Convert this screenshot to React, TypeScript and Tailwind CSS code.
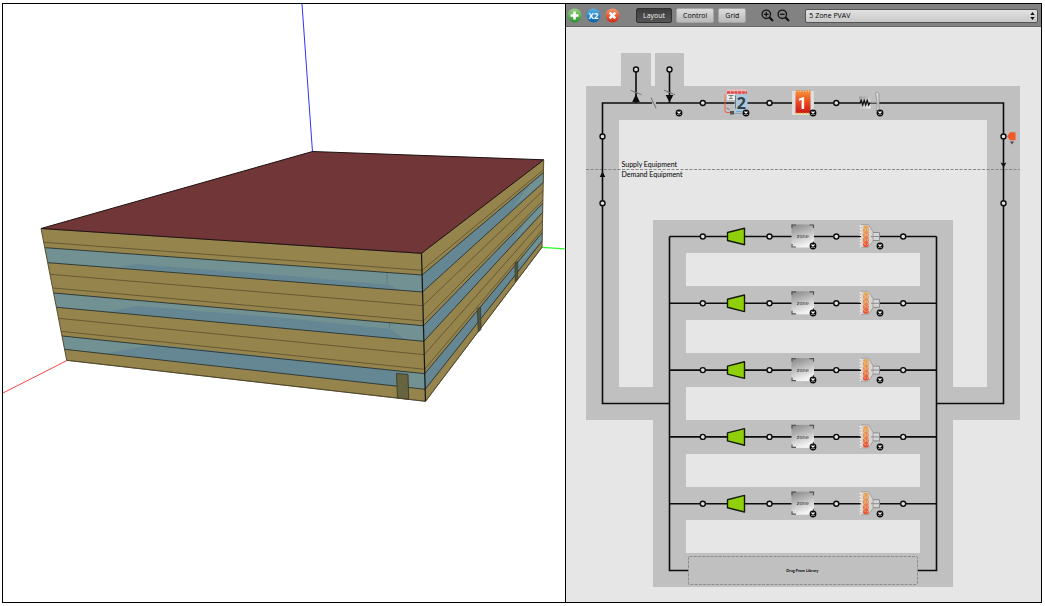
import type { ReactNode } from "react";

type Point = [number, number];

/* ---------- Building model ---------- */

// Heights at which each horizontal edge meets the three visible vertical corners.
const frontLeft: Point[] = [
  [41, 228.5], [44.3, 242.3], [45.3, 247.7], [48, 262.7], [50, 274.3], [53.3, 288], [54, 293],
  [56.7, 307.3], [58.7, 318.3], [61, 331.3], [62.3, 336], [64.7, 349.3], [66.7, 360.3],
];
const cornerY = [253.3, 270.3, 275, 292, 305.7, 321, 325.7, 341.3, 354.7, 369.3, 373.7, 389.3, 401.3];
const corner: Point[] = cornerY.map((y) => [421.5 + ((y - 253.3) / 148) * 4, y]);
const backY = [159.8, 169.7, 172.5, 182.5, 190.7, 200.3, 203.3, 212.3, 221, 229.7, 232.7, 241, 247.3];
const back: Point[] = backY.map((y) => [543.7 - ((y - 159.8) / 87.5) * 1.7, y]);

const windowTops = [2, 6, 10];
const points = (list: Point[]) => list.map((p) => p.join(",")).join(" ");

const frontReflections: Point[][] = [
  [[118, 267], [136, 264], [290, 276], [390, 285], [398, 290], [290, 281.5]],
  [[108, 311.7], [137, 306], [290, 318.5], [390, 329], [406, 340], [290, 329]],
  [[107, 353], [155, 344.5], [397, 371], [408, 373], [408, 387.5], [290, 374]],
];

const sideHighlights: Point[][] = [
  [[532, 181.5], [543.4, 172.5], [543.3, 182.5], [514, 206.5]],
  [[531, 213], [543, 203.3], [542.8, 212.3], [514, 240]],
  [[530, 245.5], [542.4, 232.7], [542.2, 241], [514, 270]],
];

function BuildingView() {
  return (
    <svg viewBox="3 4 562 598" className="block h-auto w-full" role="img" aria-label="Building model">
      <line x1="302" y1="4" x2="312.5" y2="152" stroke="#3232ff" />
      <line x1="3" y1="393" x2="67" y2="360.5" stroke="#ff4646" />
      <line x1="542" y1="247.3" x2="565" y2="248.8" stroke="#28ff28" strokeWidth="1.3" />
      <polygon points={points([frontLeft[0], corner[0], corner[12], frontLeft[12]])} fill="#96844d" />
      <polygon points={points([corner[0], back[0], back[12], corner[12]])} fill="#96844d" />
      {windowTops.map((i) => (
        <g key={i}>
          <polygon points={points([frontLeft[i], corner[i], corner[i + 1], frontLeft[i + 1]])} fill="#719193" />
          <polygon points={points([corner[i], back[i], back[i + 1], corner[i + 1]])} fill="#658793" />
        </g>
      ))}
      {frontReflections.map((shape, i) => (
        <polygon key={i} points={points(shape)} fill="#658793" />
      ))}
      {sideHighlights.map((shape, i) => (
        <polygon key={i} points={points(shape)} fill="#719193" />
      ))}
      <path d="M387 273v11M389.500 323v5" stroke="#5b7980" fill="none" strokeWidth="0.8" />
      {frontLeft.map((p, i) => {
        const heavy = windowTops.includes(i) || windowTops.includes(i - 1);
        return (
          <polyline
            key={i}
            points={points([p, corner[i], back[i]])}
            fill="none"
            stroke={heavy ? "#283230" : "#51472a"}
            strokeWidth={heavy ? 0.9 : 0.7}
          />
        );
      })}
      <polygon points="396.500,373.500 408,374.500 408.700,399.300 397.500,397.800" fill="#676440" stroke="#34331f" strokeWidth="0.8" />
      <polygon points="477.300,308.700 480.500,307.300 481,329.500 478.300,332" fill="#52583f" stroke="#303528" strokeWidth="0.7" />
      <polygon points="515,262.700 517.700,261.700 517.700,278.500 515.200,281.500" fill="#52583f" stroke="#303528" strokeWidth="0.7" />
      <polygon
        points={points([frontLeft[0], [312.5, 151.5], back[0], corner[0]])}
        fill="#703638"
        stroke="#1d1110"
        strokeLinejoin="round"
      />
      <polyline points={points([frontLeft[0], frontLeft[12], corner[12], back[12], back[0]])} fill="none" stroke="#4c4328" strokeWidth="0.9" />
      <line x1="421.500" y1="253.300" x2="425.500" y2="401.300" stroke="#14140f" strokeWidth="1.2" />
    </svg>
  );
}

/* ---------- HVAC loop diagram ---------- */

const rows = [236.5, 303.3, 370.1, 436.9, 503.7];

function Node({ x, y }: { x: number; y: number }) {
  return <circle cx={x} cy={y} r="2.500" fill="#e0e0e0" stroke="#0c0c0c" strokeWidth="1.400" />;
}

function RemoveBadge({ x, y, label }: { x: number; y: number; label: string }) {
  return (
    <foreignObject x={x - 4} y={y - 4} width="8" height="8">
      <button type="button" aria-label={label} className="block size-full cursor-pointer">
        <svg viewBox="-4 -4 8 8" className="block size-full">
          <circle r="3.400" fill="#0a0a0a" />
          <path d="M-1.500-1.500 1.500 1.500M1.500-1.500-1.500 1.500" stroke="#fff" strokeWidth="1.100" />
        </svg>
      </button>
    </foreignObject>
  );
}

function CoolingCoil() {
  return (
    <g>
      <rect x="734.500" y="94.500" width="13" height="17.500" fill="#a9c8dd" />
      <rect x="727" y="94" width="8" height="6" fill="#ececec" />
      <path d="M725 94.500v16q0 2 2 2h5" fill="none" stroke="#ee5a47" />
      <path d="M725 100v-4l1.500-2.500" fill="none" stroke="#f0a56a" />
      <path d="M727 90.500h20" stroke="#f1bdb9" strokeWidth="2" />
      <path d="M727 92.500h20" stroke="#ee4444" strokeWidth="2.500" strokeDasharray="3 .7" />
      <path d="M728.500 95.500h5M731 95.500v3M729 98.500h3.500M726.500 108l3 1.500M735.500 95.500v13" stroke="#666" strokeWidth="0.8" fill="none" />
      <rect x="730" y="111" width="4" height="3.500" fill="#555" />
      <path d="M734 113.500h9M736 111.500h6" stroke="#7fa9c5" />
      <text x="741.300" y="108.800" textAnchor="middle" fill="#383f46" className="[font-family:'Open_Sans',sans-serif] text-[16px] font-bold">2</text>
    </g>
  );
}

function HeatingCoil() {
  return (
    <g>
      <rect x="792" y="91" width="22" height="24" fill="#dedede" />
      <rect x="795.500" y="92" width="15" height="21" fill="url(#heat)" />
      <path d="M796 91.300h14.500" stroke="#ee8b35" strokeWidth="2" strokeDasharray="1.800 .8" />
      <path d="M796 113.500h14" stroke="#f3bd48" strokeWidth="1.500" strokeDasharray="2 1" />
      <text x="802.300" y="108.500" textAnchor="middle" fill="#fff" className="[font-family:Roboto,sans-serif] text-[16px] font-bold">1</text>
    </g>
  );
}

function Fan() {
  return (
    <g>
      <rect x="859" y="96.500" width="11.500" height="12" fill="url(#metal)" />
      <path d="M859 103h1.200l1-2.500 1.500 4.500 1.500-4.500 1.500 4.500 1.500-4.500 1.500 4.500 1-2h1" fill="none" stroke="#101010" strokeWidth="1.300" />
      <path d="M870.500 102.500h8.500" stroke="#999" strokeWidth="1.500" />
      <path d="M875.500 93q2-2 3.500 .5v17.500h-3q1.500-3 1-8.500t-1.500-9.500" fill="#d9d9d9" stroke="#8d8d8d" strokeWidth="0.8" />
    </g>
  );
}

function Damper({ x, y, vertical = false }: { x: number; y: number; vertical?: boolean }) {
  return (
    <path
      transform={`translate(${x} ${y})${vertical ? " rotate(42)" : ""}`}
      d="M-5.500-2.300-.5-.3M.5.200 5.500 2.200M-2.500-.8l5 1.600"
      fill="none"
      stroke="#777"
    />
  );
}

function ZoneRow({ y, index }: { y: number; index: number }) {
  return (
    <g>
      <g transform={`translate(0 ${y})`}>
        <path d="M669.500 0H936.500" stroke="#0c0c0c" strokeWidth="1.600" />
        {[702.8, 769.5, 836.3, 903.2].map((x) => (
          <Node key={x} x={x} y={0} />
        ))}
        <path d="M727.500-4 744.500-8.300V8.300L727.500 4Z" fill="#8fd00a" stroke="#141a04" strokeWidth="1.400" strokeLinejoin="round" />
        <rect x="791.500" y="-12" width="22.500" height="23" fill="url(#zone)" />
        <path d="M792-8.500v-3h4M809.500-11.500h4v3M792 7.500v3h4M813.500 7v-2" fill="none" stroke="#555" strokeWidth="1.200" />
        <text x="802.800" y="1.700" textAnchor="middle" fill="#222" className="[font-family:'DejaVu_Sans',sans-serif] text-[5px]">zone</text>
        <path d="M861-12h7.500l4.500 8h6.500V4H873l-4.500 7H861Z" fill="#d6d6d6" />
        <path d="M860.500-11V11" stroke="#f2f2f2" strokeWidth="1.500" strokeDasharray="1.500 1.500" />
        <path d="M861-12h7.500L873-4.500V4.500L868.500 11H861" fill="none" stroke="#999" strokeWidth="0.800" />
        <path d="M873-4h6.500v8H873M871 0h9" fill="none" stroke="#8b8b8b" />
        <rect x="863" y="-11" width="5.800" height="21.500" rx="2" fill="url(#reheat)" />
        <path d="M863-9l3 2.500-3 2.500 3 2.500-3 2.500 3 2.500-3 2.500 3 2.500M869-9l-2 2.500 2 2.500-2 2.500 2 2.500-2 2.500 2 2.500-2 2.500" fill="none" stroke="#f3dfc6" strokeWidth="0.500" />
      </g>
      <RemoveBadge x={812.8} y={y + 9.8} label={`Remove zone ${index + 1}`} />
      <RemoveBadge x={879.6} y={y + 9.8} label={`Remove terminal ${index + 1}`} />
    </g>
  );
}

function LoopDiagram() {
  return (
    <svg viewBox="566 27 475 575" className="block h-auto w-full bg-[#e6e6e6]">
      <defs>
        <linearGradient id="heat" x1="0" y1="0" x2="0" y2="1">
          <stop stopColor="#f58b35" />
          <stop offset=".5" stopColor="#e84924" />
          <stop offset="1" stopColor="#c91717" />
        </linearGradient>
        <linearGradient id="metal" x1="0" y1="0" x2="1" y2="1">
          <stop stopColor="#999" />
          <stop offset="1" stopColor="#f4f4f4" />
        </linearGradient>
        <linearGradient id="zone" x1="0" y1="0" x2=".35" y2="1">
          <stop stopColor="#858585" />
          <stop offset="1" stopColor="#f3f3f3" />
        </linearGradient>
        <linearGradient id="reheat" x1="0" y1="0" x2="0" y2="1">
          <stop stopColor="#e6a95c" />
          <stop offset=".5" stopColor="#e6894e" />
          <stop offset="1" stopColor="#ea4a32" />
        </linearGradient>
      </defs>

      <g shapeRendering="crispEdges">
        <path
          fill="#c0c0c0"
          fillRule="evenodd"
          d="M586 86H621V53H651V86H655V53H684V86H1020V420H586ZM619 120V387H987V120Z"
        />
        <rect x="653" y="220" width="300" height="367" fill="#c0c0c0" />
        {rows.map((y) => (
          <rect key={y} x="686" y={Math.round(y + 16.7)} width="234" height="33" fill="#e6e6e6" />
        ))}
      </g>

      <path d="M586 169.500H1020" stroke="#888" strokeDasharray="3 1.500" />
      <text x="621.500" y="167" fill="#000" className="[font-family:Lato,sans-serif] text-[7px]">Supply Equipment</text>
      <text x="621.500" y="176.500" fill="#000" className="[font-family:Lato,sans-serif] text-[7px]">Demand Equipment</text>

      <g fill="none" stroke="#0c0c0c" strokeWidth="1.600">
        <path d="M669.500 403.500H602.500V103H652M656 103H1003.500V403.500H936.500" />
        <path d="M688 570.500H669.500V236.500M917.500 570.500H936.500V236.500" />
        <path d="M636 69.500V103M669.500 69.500V103" />
      </g>
      <g fill="#0c0c0c">
        <path d="M636 94l3.800 8h-7.600ZM669.500 102.500l-3.800-7.500h7.600ZM602.500 171.500l2.800 5.500h-5.600ZM1003.500 167.500l-3-5 3 1 3-1Z" />
      </g>
      <Damper x={636} y={92.5} />
      <Damper x={669.5} y={92.5} />
      <Damper x={653.5} y={103} vertical />

      {[636, 669.5].map((x) => (
        <Node key={x} x={x} y={69.5} />
      ))}
      {[702.8, 769.5, 836.3].map((x) => (
        <Node key={x} x={x} y={103} />
      ))}
      {[136.5, 203.3].map((y) => (
        <g key={y}>
          <Node x={602.5} y={y} />
          <Node x={1003.5} y={y} />
        </g>
      ))}
      <path d="M1007 136.500l2.500-3.500v-.8h6v8h-6v-.8Z" fill="#f05a28" />
      <path d="M1010 141.500h4l-2 3Z" fill="#4a4a4a" />

      <CoolingCoil />
      <HeatingCoil />
      <Fan />
      <RemoveBadge x={679.3} y={112.8} label="Remove outdoor air system" />
      <RemoveBadge x={746.1} y={112.8} label="Remove cooling coil" />
      <RemoveBadge x={812.8} y={112.8} label="Remove heating coil" />
      <RemoveBadge x={879.6} y={112.8} label="Remove fan" />

      {rows.map((y, i) => (
        <ZoneRow key={y} y={y} index={i} />
      ))}

      <rect x="688.500" y="556.500" width="229" height="28" rx="1" fill="none" stroke="#8d8d8d" strokeDasharray="3 1.200" />
      <text x="802.300" y="571.500" textAnchor="middle" fill="#000" className="[font-family:Lato,sans-serif] text-[4px] font-bold">Drag From Library</text>
    </svg>
  );
}

/* ---------- Toolbar ---------- */

function RoundButton({ label, from, to, children }: { label: string; from: string; to: string; children: ReactNode }) {
  const id = `round-${label}`;
  return (
    <button type="button" aria-label={label} className="size-[15px] shrink-0 cursor-pointer">
      <svg viewBox="0 0 15 15" className="block size-full">
        <defs>
          <linearGradient id={id} x1="0" y1="0" x2="0" y2="1">
            <stop stopColor={from} />
            <stop offset="1" stopColor={to} />
          </linearGradient>
        </defs>
        <circle cx="7.500" cy="7.500" r="7" fill={`url(#${id})`} />
        {children}
      </svg>
    </button>
  );
}

function ZoomButton({ label, plus = false }: { label: string; plus?: boolean }) {
  return (
    <button type="button" aria-label={label} className="size-[13px] shrink-0 cursor-pointer">
      <svg viewBox="0 0 13 13" className="block size-full" fill="none" stroke="#151515">
        <circle cx="5.300" cy="5.300" r="4.200" strokeWidth="1.300" />
        <path d="M8.400 8.400 12 12" strokeWidth="2.200" />
        <path d={plus ? "M3 5.300h4.600M5.300 3v4.600" : "M3 5.300h4.600"} strokeWidth="1.300" />
      </svg>
    </button>
  );
}

const tabStyle =
  "h-[15px] shrink-0 cursor-pointer rounded-[2px] px-[6px] text-[7px] font-medium leading-[13px] border";

function Toolbar() {
  return (
    <header className="flex h-[23px] items-center border-b border-[#686868] bg-[#828282] pt-px pr-[3px] pl-px [font-family:'Open_Sans','Noto_Sans',sans-serif] text-black">
      <div className="flex gap-1">
        <RoundButton label="Add" from="#9bd089" to="#28922e">
          <path d="M7.500 3.500v8M3.500 7.500h8" stroke="#fff" strokeWidth="2.600" />
        </RoundButton>
        <RoundButton label="Duplicate" from="#55b2e5" to="#0c5fae">
          <text x="7.500" y="10.500" textAnchor="middle" fill="#fff" className="text-[8px] font-bold">X2</text>
        </RoundButton>
        <RoundButton label="Delete" from="#f69a6b" to="#cf2a10">
          <path d="m4.700 4.700 5.600 5.600m0-5.600-5.600 5.600" stroke="#fff" strokeWidth="2.600" />
        </RoundButton>
      </div>
      <nav className="ml-4 flex gap-1" aria-label="View">
        <button type="button" aria-pressed="true" className={`${tabStyle} border-[#303030] bg-linear-to-b from-[#3c3c3c] to-[#555] text-[#f0f0f0]`}>Layout</button>
        <button type="button" aria-pressed="false" className={`${tabStyle} border-[#a5a5a5] bg-linear-to-b from-[#dcdcdc] to-[#b9b9b9]`}>Control</button>
        <button type="button" aria-pressed="false" className={`${tabStyle} border-[#a5a5a5] bg-linear-to-b from-[#dcdcdc] to-[#b9b9b9]`}>Grid</button>
      </nav>
      <div className="ml-[15px] flex gap-[3px]">
        <ZoomButton label="Zoom in" plus />
        <ZoomButton label="Zoom out" />
      </div>
      <div className="relative ml-[15px] min-w-0 flex-1">
        <select
          aria-label="HVAC system"
          defaultValue="pvav"
          className="block h-[14px] w-full appearance-none rounded-[2px] border border-[#555] bg-linear-to-b from-[#e2e2e2] to-[#c9c9c9] px-[3px] text-[7px] leading-[12px] font-medium"
        >
          <option value="pvav">5 Zone PVAV</option>
        </select>
        <svg viewBox="0 0 5 8" className="pointer-events-none absolute top-[3px] right-[3px] h-2 w-[5px]" aria-hidden="true">
          <path d="M2.500 0 4.700 3H.3ZM2.500 8 .3 5h4.400Z" fill="#111" />
        </svg>
      </div>
    </header>
  );
}

export default function App() {
  return (
    <div className="bg-white pt-[3px] pr-[3px] pb-[3px] pl-[2px]">
      <main className="grid grid-cols-[562fr_476fr] border border-black">
        <section className="min-w-0">
          <BuildingView />
        </section>
        <section className="flex min-w-0 flex-col border-l border-black bg-[#e6e6e6]">
          <Toolbar />
          <LoopDiagram />
        </section>
      </main>
    </div>
  );
}
